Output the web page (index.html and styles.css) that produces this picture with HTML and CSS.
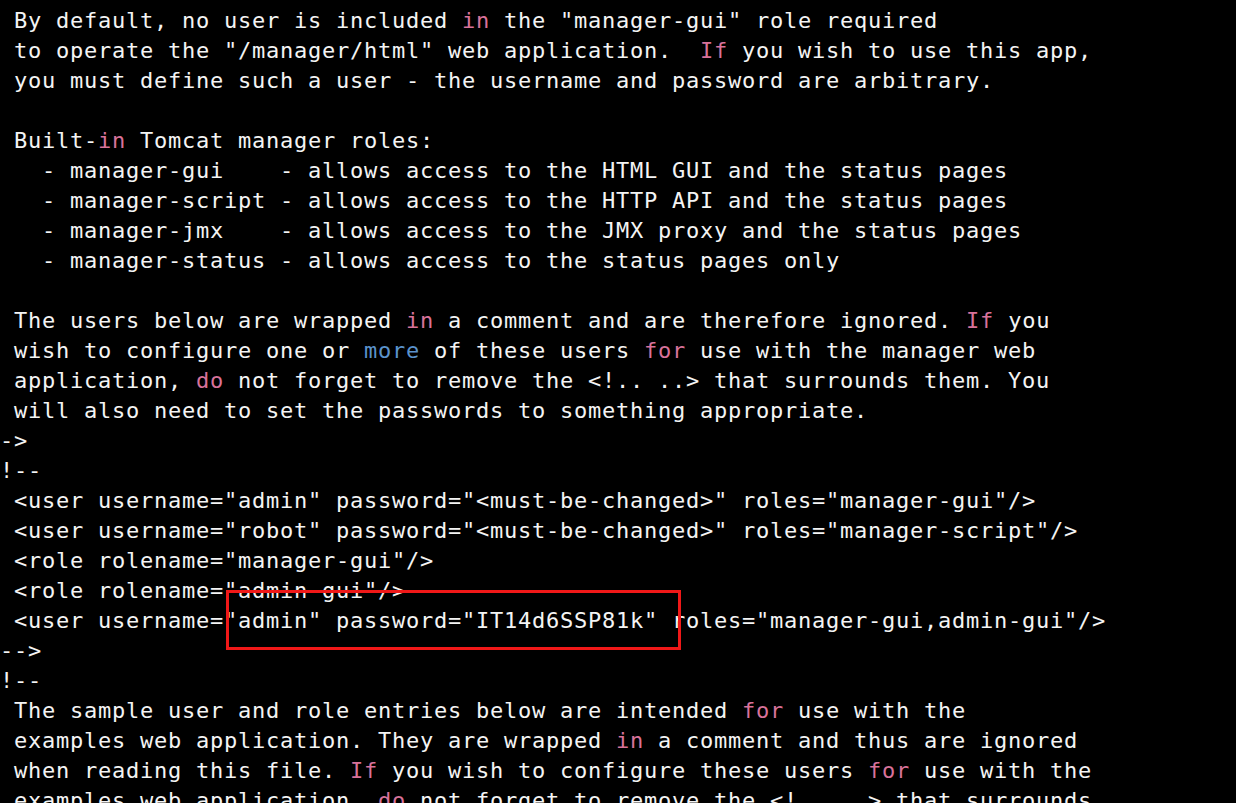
FILE: index.html
```html
<!DOCTYPE html>
<html>
<head>
<meta charset="utf-8">
<link rel="stylesheet" href="styles.css">
</head>
<body>
<div class="term">
<div class="ln"> By default, no user is included <span class="kw">in</span> the "manager-gui" role required</div>
<div class="ln"> to operate the "/manager/html" web application.  <span class="kw">If</span> you wish to use this app,</div>
<div class="ln"> you must define such a user - the username and password are arbitrary.</div>
<div class="ln"> </div>
<div class="ln"> Built-<span class="kw">in</span> Tomcat manager roles:</div>
<div class="ln">   - manager-gui    - allows access to the HTML GUI and the status pages</div>
<div class="ln">   - manager-script - allows access to the HTTP API and the status pages</div>
<div class="ln">   - manager-jmx    - allows access to the JMX proxy and the status pages</div>
<div class="ln">   - manager-status - allows access to the status pages only</div>
<div class="ln"> </div>
<div class="ln"> The users below are wrapped <span class="kw">in</span> a comment and are therefore ignored. <span class="kw">If</span> you</div>
<div class="ln"> wish to configure one or <span class="bl">more</span> of these users <span class="kw">for</span> use with the manager web</div>
<div class="ln"> application, <span class="kw">do</span> not forget to remove the &lt;!.. ..&gt; that surrounds them. You</div>
<div class="ln"> will also need to set the passwords to something appropriate.</div>
<div class="ln">-&gt;</div>
<div class="ln">!--</div>
<div class="ln"> &lt;user username="admin" password="&lt;must-be-changed&gt;" roles="manager-gui"/&gt;</div>
<div class="ln"> &lt;user username="robot" password="&lt;must-be-changed&gt;" roles="manager-script"/&gt;</div>
<div class="ln"> &lt;role rolename="manager-gui"/&gt;</div>
<div class="ln"> &lt;role rolename="admin-gui"/&gt;</div>
<div class="ln"> &lt;user username="admin" password="IT14d6SSP81k" roles="manager-gui,admin-gui"/&gt;</div>
<div class="ln">--&gt;</div>
<div class="ln">!--</div>
<div class="ln"> The sample user and role entries below are intended <span class="kw">for</span> use with the</div>
<div class="ln"> examples web application. They are wrapped <span class="kw">in</span> a comment and thus are ignored</div>
<div class="ln"> when reading this file. <span class="kw">If</span> you wish to configure these users <span class="kw">for</span> use with the</div>
<div class="ln"> examples web application, <span class="kw">do</span> not forget to remove the &lt;!.. ..&gt; that surrounds</div>
<div class="mark"></div>
</div>
</body>
</html>
```

FILE: styles.css
```css
html, body {
  margin: 0;
  padding: 0;
  background: #000;
  height: 100%;
  overflow: hidden;
}
.term {
  position: relative;
  padding-top: 6px;
  font-family: "DejaVu Sans Mono", monospace;
  font-size: 22px;
  letter-spacing: 0.756px;
  line-height: 30px;
  color: #f4f4f4;
}
.ln {
  white-space: pre;
  height: 30px;
}
.kw {
  color: #d8729a;
}
.bl {
  color: #5b93cc;
}
.mark {
  position: absolute;
  left: 226px;
  top: 590px;
  width: 449px;
  height: 54px;
  border: 3px solid #f01818;
}
```
